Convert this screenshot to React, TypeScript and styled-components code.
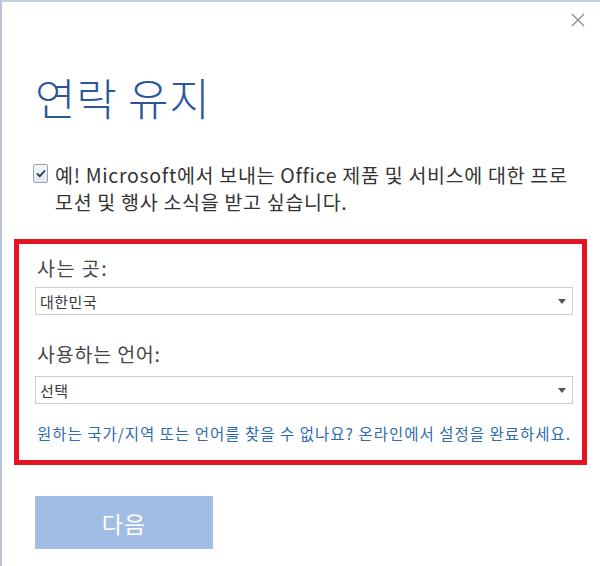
import React from "react";
import styled, { createGlobalStyle } from "styled-components";

const Global = createGlobalStyle`
  html, body { margin: 0; padding: 0; background: #ffffff; }
  body { font-family: "Noto Sans CJK KR", "Noto Sans", sans-serif; }
  * { box-sizing: border-box; }
`;

const Frame = styled.div`
  width: 600px;
  height: 566px;
  background: #ffffff;
  border-left: 2px solid #b7c5da;
  border-top: 2px solid #c5d0e0;
  display: flex;
  flex-direction: column;
  overflow: hidden;
`;

const TopBar = styled.div`
  display: flex;
  justify-content: flex-end;
  padding: 7px 11px 0 0;
  height: 65px;
`;

const CloseButton = styled.button`
  width: 22px;
  height: 22px;
  border: none;
  background: transparent;
  padding: 0;
  display: flex;
  align-items: center;
  justify-content: center;
  cursor: pointer;
`;

const Title = styled.h1`
  margin: 0 0 0 33px;
  font-size: 44px;
  line-height: 60px;
  font-weight: 300;
  color: #2b579a;
  letter-spacing: 0.8px;
`;

const CheckRow = styled.label`
  display: flex;
  align-items: flex-start;
  gap: 7px;
  margin: 34px 0 0 31px;
  padding-right: 20px;
`;

const CheckBox = styled.span`
  flex: none;
  width: 15px;
  height: 19px;
  margin-top: 3px;
  border: 1px solid #9aa3ad;
  border-radius: 2px;
  background: linear-gradient(#f4f6f9, #e3e8ee);
  display: flex;
  align-items: center;
  justify-content: center;
`;

const CheckText = styled.span`
  font-size: 19.5px;
  line-height: 27px;
  color: #333333;
  letter-spacing: 0.7px;
  white-space: nowrap;
`;

const RedBox = styled.div`
  margin: 24px 13px 0 12px;
  border: 5px solid #e3141f;
  padding: 11px 9px 17px 16px;
  display: flex;
  flex-direction: column;
`;

const FieldLabel = styled.div<{ $spacing: number }>`
  font-size: 19.5px;
  line-height: 26px;
  color: #474747;
  letter-spacing: ${(p) => p.$spacing}px;
  margin-left: 2px;
`;

const Select = styled.div<{ $gap: number }>`
  margin-top: ${(p) => p.$gap}px;
  height: 28px;
  border: 1px solid #cdcdcd;
  background: #ffffff;
  display: flex;
  align-items: center;
  justify-content: space-between;
  padding: 0 6px 0 4px;
  font-size: 15px;
  letter-spacing: 0.5px;
  color: #3a3a3a;
`;

const Arrow = styled.span`
  width: 0;
  height: 0;
  border-left: 4px solid transparent;
  border-right: 4px solid transparent;
  border-top: 5px solid #555555;
`;

const Spacer = styled.div<{ $h: number }>`
  height: ${(p) => p.$h}px;
`;

const HelpLink = styled.a`
  margin-top: 19px;
  font-size: 15.5px;
  line-height: 20px;
  color: #2f6bb3;
  text-decoration: none;
  white-space: nowrap;
  letter-spacing: 1px;
  margin-left: 2px;
`;

const NextButton = styled.button`
  margin: 31px 0 0 33px;
  width: 178px;
  height: 53px;
  border: none;
  background: #a2bde5;
  color: #ffffff;
  font-family: "Noto Sans CJK KR", sans-serif;
  font-size: 23px;
  letter-spacing: 1px;
  display: flex;
  align-items: center;
  justify-content: center;
`;

export default function App() {
  return (
    <>
      <Global />
      <Frame>
        <TopBar>
          <CloseButton aria-label="닫기">
            <svg width="14" height="14" viewBox="0 0 14 14">
              <path d="M1 1 L13 13 M13 1 L1 13" stroke="#8a8a8a" strokeWidth="1.3" fill="none" />
            </svg>
          </CloseButton>
        </TopBar>
        <Title>연락 유지</Title>
        <CheckRow>
          <CheckBox>
            <svg width="10" height="9" viewBox="0 0 10 9">
              <path d="M1 4.5 L3.8 7.3 L9 1.5" stroke="#1f3556" strokeWidth="1.8" fill="none" />
            </svg>
          </CheckBox>
          <CheckText>
            예! Microsoft에서 보내는 Office 제품 및 서비스에 대한 프로
            <br />
            모션 및 행사 소식을 받고 싶습니다.
          </CheckText>
        </CheckRow>
        <RedBox>
          <FieldLabel $spacing={1.5}>사는 곳:</FieldLabel>
          <Select $gap={6}>
            <span>대한민국</span>
            <Arrow />
          </Select>
          <Spacer $h={26} />
          <FieldLabel $spacing={0.8}>사용하는 언어:</FieldLabel>
          <Select $gap={9}>
            <span>선택</span>
            <Arrow />
          </Select>
          <HelpLink href="#">
            원하는 국가/지역 또는 언어를 찾을 수 없나요? 온라인에서 설정을 완료하세요.
          </HelpLink>
        </RedBox>
        <NextButton>다음</NextButton>
      </Frame>
    </>
  );
}
